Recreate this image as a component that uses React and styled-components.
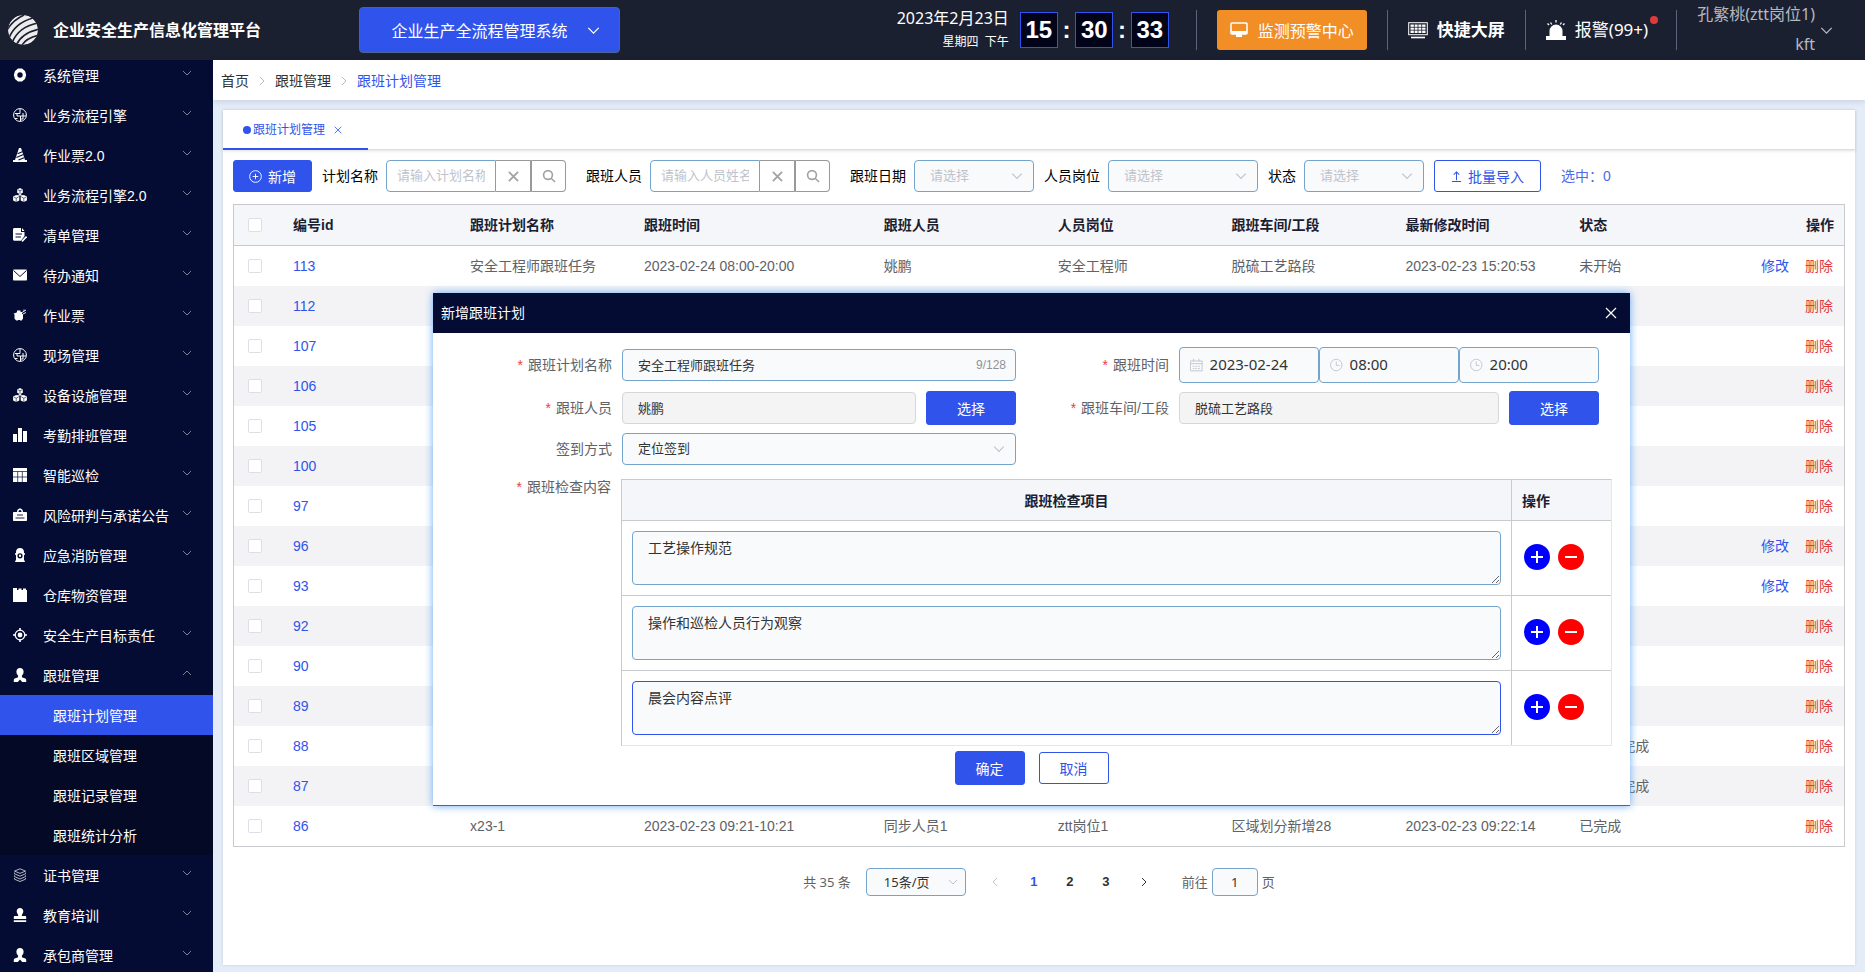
import React, { useState } from "react";
import styled, { createGlobalStyle, css } from "styled-components";

const latin = `"Liberation Sans", "Noto Sans CJK SC", sans-serif`;
const ui = `"Noto Sans", "Noto Sans CJK SC", sans-serif`;

const GlobalStyle = createGlobalStyle`
  * {
    box-sizing: border-box;
  }
  body {
    margin: 0;
    font-family: ${latin};
    font-size: 14px;
    line-height: 20px;
    color: #606266;
  }
  button, input, select, textarea {
    font-family: inherit;
    margin: 0;
    outline: none;
  }
  button {
    cursor: pointer;
    padding: 0;
  }
  a {
    text-decoration: none;
  }
`;

/* ---------- icons ---------- */

const Chevron = ({ size = 10, up, left, right }) => {
  let d = "M1 3l4 4 4-4";
  if (up) d = "M1 7l4-4 4 4";
  if (left) d = "M7 1L3 5l4 4";
  if (right) d = "M3 1l4 4-4 4";
  return (
    <svg width={size} height={size} viewBox="0 0 10 10" fill="none" stroke="currentColor" aria-hidden="true">
      <path d={d} />
    </svg>
  );
};

const Cross = ({ size = 12, weight = 1 }) => (
  <svg width={size} height={size} viewBox="0 0 12 12" stroke="currentColor" strokeWidth={weight} aria-hidden="true">
    <path d="M1 1l10 10M11 1L1 11" />
  </svg>
);

const Search = () => (
  <svg width="14" height="14" viewBox="0 0 14 14" fill="none" stroke="currentColor" strokeWidth="1.6" aria-hidden="true">
    <circle cx="6" cy="6" r="4.4" />
    <path d="M9.2 9.2l3.8 3.8" />
  </svg>
);

const Logo = () => (
  <svg width="32" height="32" viewBox="0 0 32 32" aria-hidden="true">
    <clipPath id="globe">
      <circle cx="16" cy="16" r="15" />
    </clipPath>
    <g clipPath="url(#globe)">
      <circle cx="16" cy="16" r="15" fill="#ececec" />
      <g fill="none" stroke="#1b2031" strokeWidth="1.7">
        <path d="M0 16Q6 6 17 1" />
        <path d="M2 24Q8 9 26 4" />
        <path d="M5 29Q11 13 31 9" />
        <path d="M9 32Q14 19 33 15" />
        <path d="M14 33Q18 24 33 21" />
      </g>
    </g>
  </svg>
);

const globeIcon = (
  <g fill="none" stroke="currentColor" strokeWidth="1">
    <circle cx="7" cy="7" r="6.4" />
    <path d="M7 1v4.500H2M4 5.500v2.500h3.500v5M7.500 8H13M10 5v3M10 8v3H8M2 10.500h2.500" />
  </g>
);
const cubesIcon = (
  <g>
    <path d="M7 0l2.800 1.400v3.400L7 6.200 4.200 4.800V1.400z" />
    <path d="M3.200 7l3.100 1.500v3.900L3.200 14 .1 12.400V8.500zM10.800 7l3.100 1.500v3.900L10.800 14l-3.100-1.600V8.500z" />
    <path d="M7 5v3M7 6.500L4 8M7 6.500L10 8" stroke="currentColor" />
    <path d="M7 2.800v3M3.200 10.200V14M10.800 10.200V14M4.800 1.800L7 2.800l2.200-1M.8 9l2.400 1.200L5.600 9M8.400 9l2.400 1.200L13.200 9" stroke="#050c33" strokeWidth=".6" fill="none" />
  </g>
);
const personIcon = (
  <path d="M7 0c2.200 0 3.600 1.500 3.600 3.600 0 1.800-.7 3.200-1.700 4.200v1.400l3.300 1.200c.8.300 1 .9 1 1.800V14H9.200L7 11.500 4.800 14H.8v-1.800c0-.9.200-1.500 1-1.800l3.300-1.200V7.800C4.100 6.800 3.400 5.400 3.400 3.600 3.400 1.500 4.800 0 7 0z" />
);

const glyphs = {
  gear: <path fillRule="evenodd" d="M5 .4h4L12 3l1.200 4L12 11l-3 2.600H5L2 11 .8 7 2 3zM7 4.300a2.700 2.700 0 100 5.400 2.700 2.700 0 000-5.400z" />,
  globe: globeIcon,
  cone: (
    <g>
      <path d="M6 0h2l4 12h2v2H0v-2h2z" />
      <path d="M4.600 5.800l4.600-2M3.400 9.600l7-3M5.500 12l5.500-2.300" stroke="#050c33" strokeWidth="1.100" />
    </g>
  ),
  cubes: cubesIcon,
  note: (
    <g>
      <path d="M0 1.500C0 .6.600 0 1.500 0H8v4h3.500v4L8 12.800H1.500C.6 12.800 0 12.200 0 11.300zM9 0l2.500 3H9z" />
      <path d="M2.500 6h6.500M2.500 9h5.500" stroke="#050c33" strokeWidth="1.200" />
      <path d="M9 13.400l4.500-4.800" stroke="currentColor" strokeWidth="1.600" />
    </g>
  ),
  mail: (
    <g>
      <rect y="1.500" width="14" height="11" rx="1" />
      <path d="M.5 2.500L7 8.500l6.500-6" fill="none" stroke="#050c33" />
    </g>
  ),
  spray: (
    <g>
      <path d="M4 2.500h3.500V4H9v1.500l1 1V10c0 1.500-1 2-2 2H4c-1.500 0-2.500-.5-2.500-2V6.500L.5 5.500l2-.5 1.500-.7z" />
      <path d="M9 4.500l4-2.500M10 6l3-1.500M11 3V1.500M4 12v1M8 12v1" stroke="currentColor" strokeWidth=".9" />
    </g>
  ),
  bars: <path d="M0 6h4v8H0zM5 0h4v14H5zM10 3h4v11h-4z" />,
  grid: (
    <g>
      <path d="M0 0h14v14H0z" />
      <path d="M0 3.500h14M0 9h14M4.700 3.500V14M9.300 3.500V14" stroke="#050c33" strokeWidth=".7" />
    </g>
  ),
  badge: (
    <g>
      <path fillRule="evenodd" d="M4 4c0-2 1.200-3.500 3-3.500S10 2 10 4h3c.6 0 1 .4 1 1v7c0 .6-.4 1-1 1H1c-.6 0-1-.4-1-1V5c0-.6.400-1 1-1zm1.500 0h3c0-1.300-.5-2-1.500-2s-1.500.7-1.500 2z" />
      <path d="M4 7h6M2.500 10h9" stroke="#050c33" strokeWidth=".9" />
    </g>
  ),
  hydrant: (
    <path fillRule="evenodd" d="M3 4c0-2.500 1.600-4 4-4s4 1.500 4 4v1h.800v2H11v5.500h.800V14H2.200v-1.500H3V7h-.8V5H3zm4 1.200a2.600 2.600 0 100 5.200 2.600 2.600 0 000-5.200zm0 1.400a1.200 1.200 0 110 2.400 1.200 1.200 0 010-2.400z" />
  ),
  box: <path d="M0 0h4v2h1.500V.6h3V2H10V.6h3V2h1v12H0z" />,
  target: (
    <g>
      <circle cx="7" cy="7" r="4.800" fill="none" stroke="currentColor" strokeWidth="1.300" />
      <circle cx="7" cy="7" r="2.400" />
      <path d="M7 0v3M7 11v3M0 7h3M11 7h3" stroke="currentColor" strokeWidth="1.600" />
    </g>
  ),
  person: personIcon,
  layers: (
    <path d="M7 .8l5.500 2.300L7 5.400 1.500 3.100zM1.500 4.500v1.300L7 8.200l5.500-2.400V4.500M1.500 7.300v1.300L7 11l5.500-2.400V7.300M1.500 10v1.200L7 13.500l5.500-2.300V10" fill="none" stroke="currentColor" strokeWidth=".7" />
  ),
  stamp: <path d="M7 0c2 0 3.300 1.400 3.300 3.200C10.300 5 9 6 8.700 8H12c.8 0 1.200.4 1.200 1.200V11H.8V9.200C.8 8.400 1.200 8 2 8h3.300C5 6 3.700 5 3.700 3.200 3.700 1.400 5 0 7 0zM.8 12.300h12.400V14H.8z" />,
};

const Glyph = ({ name }) => (
  <svg width="14" height="14" viewBox="0 0 14 14" fill="currentColor" aria-hidden="true">
    {glyphs[name]}
  </svg>
);

/* ---------- data ---------- */

const menu = [
  { icon: "gear", label: "系统管理" },
  { icon: "globe", label: "业务流程引擎" },
  { icon: "cone", label: "作业票2.0" },
  { icon: "cubes", label: "业务流程引擎2.0" },
  { icon: "note", label: "清单管理" },
  { icon: "mail", label: "待办通知" },
  { icon: "spray", label: "作业票" },
  { icon: "globe", label: "现场管理" },
  { icon: "cubes", label: "设备设施管理" },
  { icon: "bars", label: "考勤排班管理" },
  { icon: "grid", label: "智能巡检" },
  { icon: "badge", label: "风险研判与承诺公告" },
  { icon: "hydrant", label: "应急消防管理" },
  { icon: "box", label: "仓库物资管理", leaf: true },
  { icon: "target", label: "安全生产目标责任" },
  {
    icon: "person",
    label: "跟班管理",
    children: ["跟班计划管理", "跟班区域管理", "跟班记录管理", "跟班统计分析"],
  },
  { icon: "layers", label: "证书管理" },
  { icon: "stamp", label: "教育培训" },
  { icon: "person", label: "承包商管理" },
];

const columns = ["编号id", "跟班计划名称", "跟班时间", "跟班人员", "人员岗位", "跟班车间/工段", "最新修改时间", "状态"];

const rows = [
  {
    id: 113,
    cells: ["安全工程师跟班任务", "2023-02-24 08:00-20:00", "姚鹏", "安全工程师", "脱硫工艺路段", "2023-02-23 15:20:53", "未开始"],
    editable: true,
  },
  { id: 112 },
  { id: 107 },
  { id: 106 },
  { id: 105 },
  { id: 100 },
  { id: 97 },
  { id: 96, editable: true },
  { id: 93, editable: true },
  { id: 92 },
  { id: 90 },
  { id: 89 },
  { id: 88, cells: ["", "", "", "", "", "", "超时已完成"] },
  { id: 87, cells: ["", "", "", "", "", "", "超时已完成"] },
  {
    id: 86,
    cells: ["x23-1", "2023-02-23 09:21-10:21", "同步人员1", "ztt岗位1", "区域划分新增28", "2023-02-23 09:22:14", "已完成"],
  },
];

const emptyCells = ["", "", "", "", "", "", ""];

/* ---------- page ---------- */

const Header = () => (
  <TopBar>
    <Logo />
    <Brand>企业安全生产信息化管理平台</Brand>
    <SystemButton type="button">
      企业生产全流程管理系统
      <Chevron size={13} />
    </SystemButton>
    <HeaderRight>
      <DateBlock>
        <span>2023年2月23日</span>
        <small>星期四&nbsp; 下午</small>
      </DateBlock>
      <Clock>
        <b>15</b>:<b>30</b>:<b>33</b>
      </Clock>
      <Divider />
      <WarnButton type="button">
        <svg width="18" height="16" viewBox="0 0 18 16" fill="none" aria-hidden="true">
          <rect x="1" y="1" width="16" height="11" rx="1" stroke="#fff" strokeWidth="1.6" />
          <path d="M1 9h16v3H1zM6 12h6v3H6z" fill="#fff" />
        </svg>
        监测预警中心
      </WarnButton>
      <Divider />
      <HeaderLink href="#screen" $bold>
        <svg width="20" height="18" viewBox="0 0 20 18" fill="none" stroke="#fff" aria-hidden="true">
          <rect x=".7" y="1.700" width="18.600" height="12" />
          <path d="M2.500 3.500h15v8.500h-15z" fill="#fff" stroke="none" />
          <path d="M2 6.300h16M2 9.200h16M6.300 3v9.500M10 3v9.500M13.700 3v9.500" stroke="#1b2031" strokeWidth=".8" />
          <path d="M3 16.500h14" strokeWidth="1.600" />
        </svg>
        快捷大屏
      </HeaderLink>
      <Divider />
      <HeaderLink href="#alarm">
        <svg width="20" height="20" viewBox="0 0 20 20" fill="#fff" aria-hidden="true">
          <path d="M3.500 16V11a6.500 6.500 0 0113 0v5H20v4H0v-4z" />
          <path d="M10 0v2.500M4.500 2.500l1.300 2M15.500 2.500l-1.300 2M1.500 3.500L3 5M18.500 3.500L17 5" stroke="#fff" strokeWidth="1.300" />
        </svg>
        <Alarm>报警(99+)</Alarm>
      </HeaderLink>
      <Divider />
      <UserButton type="button">
        <span>
          孔繁桃(ztt岗位1)
          <br />
          kft
        </span>
        <Chevron size={13} />
      </UserButton>
    </HeaderRight>
  </TopBar>
);

const Sidebar = () => (
  <SideNav aria-label="主菜单">
    <MenuList>
      {menu.map((item, i) => (
        <li key={i}>
          <MenuItem href="#menu">
            <Glyph name={item.icon} />
            <span>{item.label}</span>
            {!item.leaf && <Chevron up={!!item.children} />}
          </MenuItem>
          {item.children && (
            <SubMenu>
              {item.children.map((child, n) => (
                <li key={child}>
                  <SubItem href="#sub" $active={n === 0}>
                    {child}
                  </SubItem>
                </li>
              ))}
            </SubMenu>
          )}
        </li>
      ))}
    </MenuList>
  </SideNav>
);

const SearchField = ({ id, label, placeholder }) => (
  <Field $wide>
    <label htmlFor={id}>{label}</label>
    <SearchGroup>
      <input id={id} type="text" placeholder={placeholder} />
      <button type="button" aria-label="清空">
        <Cross size={11} weight={2} />
      </button>
      <button type="button" aria-label="搜索">
        <Search />
      </button>
    </SearchGroup>
  </Field>
);

const FilterSelect = ({ id, label, width }) => (
  <Field>
    <label htmlFor={id}>{label}</label>
    <SelectBox $width={width} $empty>
      <select id={id}>
        <option>请选择</option>
      </select>
      <Chevron size={12} />
    </SelectBox>
  </Field>
);

const PlanTable = () => (
  <Table>
    <colgroup>
      <col style={{ width: 49 }} />
      <col style={{ width: "11%" }} />
      <col style={{ width: "10.8%" }} />
      <col style={{ width: "14.9%" }} />
      <col style={{ width: "10.8%" }} />
      <col style={{ width: "10.8%" }} />
      <col style={{ width: "10.8%" }} />
      <col style={{ width: "10.8%" }} />
      <col />
      <col style={{ width: 100 }} />
    </colgroup>
    <thead>
      <tr>
        <th>
          <Checkbox type="checkbox" aria-label="全选" />
        </th>
        {columns.map((name) => (
          <th key={name}>{name}</th>
        ))}
        <ActionHead>操作</ActionHead>
      </tr>
    </thead>
    <tbody>
      {rows.map((row) => (
        <tr key={row.id}>
          <td>
            <Checkbox type="checkbox" aria-label={`选择 ${row.id}`} />
          </td>
          <td>
            <TextLink href="#detail">{row.id}</TextLink>
          </td>
          {(row.cells || emptyCells).map((text, i) => (
            <td key={i}>{text}</td>
          ))}
          <ActionCell>
            {row.editable && <TextLink href="#edit">修改</TextLink>}
            <TextLink href="#delete" $danger>
              删除
            </TextLink>
          </ActionCell>
        </tr>
      ))}
    </tbody>
  </Table>
);

const PlanDialog = () => {
  const [checks, setChecks] = useState(["工艺操作规范", "操作和巡检人员行为观察", "晨会内容点评"]);

  const update = (i, value) => setChecks(checks.map((c, n) => (n === i ? value : c)));
  const add = (i) => setChecks([...checks.slice(0, i + 1), "", ...checks.slice(i + 1)]);
  const remove = (i) => setChecks(checks.filter((_, n) => n !== i));

  return (
    <Dialog role="dialog" aria-labelledby="dialog-title">
      <DialogHead>
        <h2 id="dialog-title">新增跟班计划</h2>
        <button type="button" aria-label="关闭">
          <Cross size={12} weight={1.2} />
        </button>
      </DialogHead>
      <FormColumns>
        <FormColumn>
          <FormRow $height={44}>
            <FormLabel htmlFor="plan-name" $required>
              跟班计划名称
            </FormLabel>
            <CountInput>
              <input id="plan-name" type="text" defaultValue="安全工程师跟班任务" />
              <span>9/128</span>
            </CountInput>
          </FormRow>
          <FormRow $height={42}>
            <FormLabel htmlFor="person" $required>
              跟班人员
            </FormLabel>
            <DisabledInput id="person" type="text" value="姚鹏" disabled />
            <Button type="button" $primary $width={90}>
              选择
            </Button>
          </FormRow>
          <FormRow $height={40}>
            <FormLabel htmlFor="sign">签到方式</FormLabel>
            <SelectBox $grow>
              <select id="sign">
                <option>定位签到</option>
              </select>
              <Chevron size={12} />
            </SelectBox>
          </FormRow>
        </FormColumn>
        <FormColumn $right>
          <FormRow $height={44}>
            <FormLabel htmlFor="date" $required>
              跟班时间
            </FormLabel>
            <TimeInput>
              <svg width="14" height="14" viewBox="0 0 14 14" fill="none" stroke="currentColor" aria-hidden="true">
                <path d="M.5 2.500h13v11H.5zM.5 5.500h13M4 0v3M10 0v3" />
                <path d="M3 8.500h8M3 11h8" strokeDasharray="2 1" />
              </svg>
              <input id="date" type="text" defaultValue="2023-02-24" />
            </TimeInput>
            {["08:00", "20:00"].map((time) => (
              <TimeInput key={time}>
                <svg width="14" height="14" viewBox="0 0 14 14" fill="none" stroke="currentColor" aria-hidden="true">
                  <circle cx="7" cy="7" r="6.400" />
                  <path d="M7 3v4.500h3.500" />
                </svg>
                <input type="text" aria-label="时间" defaultValue={time} />
              </TimeInput>
            ))}
          </FormRow>
          <FormRow $height={42}>
            <FormLabel htmlFor="area" $required>
              跟班车间/工段
            </FormLabel>
            <DisabledInput id="area" type="text" value="脱硫工艺路段" disabled />
            <Button type="button" $primary $width={90}>
              选择
            </Button>
          </FormRow>
        </FormColumn>
      </FormColumns>
      <CheckRow>
        <FormLabel as="span" $required>
          跟班检查内容
        </FormLabel>
        <CheckTable>
          <thead>
            <tr>
              <th>跟班检查项目</th>
              <th>操作</th>
            </tr>
          </thead>
          <tbody>
            {checks.map((text, i) => (
              <tr key={i}>
                <td>
                  <CheckText
                    aria-label={`检查项目 ${i + 1}`}
                    value={text}
                    $focused={i === 2}
                    onChange={(e) => update(i, e.target.value)}
                  />
                </td>
                <td>
                  <RoundButtons>
                    <RoundButton type="button" aria-label="增加" onClick={() => add(i)}>
                      <svg width="12" height="12" viewBox="0 0 12 12" stroke="#fff" strokeWidth="2" aria-hidden="true">
                        <path d="M0 6h12M6 0v12" />
                      </svg>
                    </RoundButton>
                    <RoundButton type="button" aria-label="移除" $red onClick={() => remove(i)}>
                      <svg width="12" height="12" viewBox="0 0 12 12" stroke="#fff" strokeWidth="2" aria-hidden="true">
                        <path d="M0 6h12" />
                      </svg>
                    </RoundButton>
                  </RoundButtons>
                </td>
              </tr>
            ))}
          </tbody>
        </CheckTable>
      </CheckRow>
      <DialogFoot>
        <Button type="button" $primary $width={70}>
          确定
        </Button>
        <Button type="button" $width={70}>
          取消
        </Button>
      </DialogFoot>
    </Dialog>
  );
};

const App = () => (
  <Page>
    <GlobalStyle />
    <Header />
    <Body>
      <Sidebar />
      <Main>
        <Breadcrumb aria-label="面包屑">
          <a href="#home">首页</a>
          <Chevron right />
          <a href="#group">跟班管理</a>
          <Chevron right />
          <a href="#plan" aria-current="page">
            跟班计划管理
          </a>
        </Breadcrumb>
        <Card>
          <Tabs>
            <Tab>
              <i />
              <a href="#plan">跟班计划管理</a>
              <button type="button" aria-label="关闭标签">
                <Cross size={8} weight={1.2} />
              </button>
            </Tab>
          </Tabs>
          <Toolbar>
            <Button type="button" $primary $width={79} $gap={6}>
              <svg width="13" height="13" viewBox="0 0 14 14" fill="none" stroke="currentColor" aria-hidden="true">
                <circle cx="7" cy="7" r="6.300" />
                <path d="M4 7h6M7 4v6" />
              </svg>
              新增
            </Button>
            <SearchField id="q-plan" label="计划名称" placeholder="请输入计划名称" />
            <SearchField id="q-person" label="跟班人员" placeholder="请输入人员姓名" />
            <FilterSelect id="q-date" label="跟班日期" width={120} />
            <FilterSelect id="q-post" label="人员岗位" width={150} />
            <FilterSelect id="q-state" label="状态" width={120} />
            <Button type="button" $width={107} $gap={6}>
              <svg width="11" height="11" viewBox="0 0 12 12" fill="none" stroke="currentColor" strokeWidth="1.100" aria-hidden="true">
                <path d="M1 11.400h10M6 10V1M3 4l3-3 3 3" />
              </svg>
              批量导入
            </Button>
            <Selected>选中：0</Selected>
          </Toolbar>
          <PlanTable />
          <Pagination aria-label="分页">
            <span>共 35 条</span>
            <SelectBox $small>
              <select aria-label="每页条数">
                <option>15条/页</option>
              </select>
              <Chevron />
            </SelectBox>
            <Pager>
              <button type="button" aria-label="上一页" disabled>
                <Chevron left />
              </button>
              <button type="button" aria-current="page">
                1
              </button>
              <button type="button">2</button>
              <button type="button">3</button>
              <button type="button" aria-label="下一页">
                <Chevron right />
              </button>
            </Pager>
            <Jump>
              前往
              <input type="text" defaultValue="1" />页
            </Jump>
          </Pagination>
        </Card>
        <PlanDialog />
      </Main>
    </Body>
  </Page>
);

const Page = styled.div`
  display: flex;
  flex-direction: column;
  height: 100vh;
  overflow: hidden;
`;

const TopBar = styled.header`
  display: flex;
  align-items: center;
  flex: none;
  height: 60px;
  padding: 0 32px 0 7px;
  background: #1b2031;
  color: #fff;
  font-family: ${ui};
  font-size: 16px;
`;

const Brand = styled.h1`
  margin: 0 98px 0 14px;
  font-size: 16px;
  font-weight: 700;
  white-space: nowrap;
`;

const SystemButton = styled.button`
  display: flex;
  align-items: center;
  justify-content: center;
  gap: 19px;
  width: 261px;
  height: 46px;
  padding-left: 12px;
  border: 1px solid #4a6499;
  border-radius: 4px;
  background: #3054eb;
  color: #fff;
  font-size: 16px;
`;

const HeaderRight = styled.div`
  display: flex;
  align-items: center;
  margin-left: auto;
  white-space: nowrap;
`;

const DateBlock = styled.div`
  display: flex;
  flex-direction: column;
  align-items: flex-end;
  margin-right: 11px;
  padding-bottom: 2px;
  line-height: 24px;
  small {
    padding-top: 2px;
    font-size: 12px;
    line-height: 20px;
  }
`;

const Clock = styled.div`
  display: flex;
  align-items: center;
  justify-content: space-between;
  width: 149px;
  font: 700 24px/34px ${latin};
  b {
    width: 38px;
    border: 1px solid #3054eb;
    background: #02041a;
    text-align: center;
  }
`;

const Divider = styled.i`
  width: 1px;
  height: 40px;
  margin: 0 20px;
  background: #5b6479;
  ${Clock} + & {
    margin-left: 27px;
  }
`;

const WarnButton = styled.button`
  display: flex;
  align-items: center;
  justify-content: center;
  gap: 10px;
  width: 150px;
  height: 40px;
  border: 0;
  border-radius: 3px;
  background: #f28e26;
  color: #fff;
  font-size: 16px;
`;

const HeaderLink = styled.a`
  display: flex;
  align-items: center;
  gap: 9px;
  color: #fff;
  font-size: 17px;
  font-weight: ${(p) => (p.$bold ? 700 : 400)};
`;

const Alarm = styled.span`
  position: relative;
  margin-right: 8px;
  &::after {
    content: "";
    position: absolute;
    top: -4px;
    right: -10px;
    width: 8px;
    height: 8px;
    border-radius: 50%;
    background: #dc3b3b;
  }
`;

const UserButton = styled.button`
  display: flex;
  align-items: center;
  gap: 5px;
  border: 0;
  background: none;
  color: #b4b9c2;
  font-size: 16px;
  line-height: 30px;
  text-align: right;
  span {
    padding-bottom: 2px;
  }
`;

const Body = styled.div`
  display: flex;
  flex: 1;
  min-height: 0;
`;

const SideNav = styled.nav`
  flex: none;
  width: 213px;
  overflow: hidden;
  background: #050c33;
`;

const MenuList = styled.ul`
  margin: -5px 0 0;
  padding: 0;
  list-style: none;
`;

const MenuItem = styled.a`
  display: flex;
  align-items: center;
  height: 40px;
  padding: 0 21px 0 13px;
  color: #fff;
  span {
    flex: 1;
    margin-left: 16px;
    padding-top: 2px;
  }
  span + svg {
    margin-bottom: 4px;
    color: #7a7f92;
  }
`;

const SubMenu = styled.ul`
  margin: 0;
  padding: 0;
  list-style: none;
  background: #040926;
`;

const SubItem = styled.a`
  display: block;
  height: 40px;
  padding-left: 53px;
  line-height: 42px;
  color: #fff;
  background: ${(p) => (p.$active ? "#3054eb" : "none")};
`;

const Main = styled.main`
  position: relative;
  display: flex;
  flex-direction: column;
  flex: 1;
  min-width: 0;
  background: #e4ecf8;
`;

const Breadcrumb = styled.nav`
  display: flex;
  align-items: center;
  gap: 8px;
  flex: none;
  height: 40px;
  padding: 2px 0 0 8px;
  background: #fff;
  box-shadow: 0 1px 6px rgba(0, 30, 60, 0.15);
  color: #b4b9c4;
  a {
    color: #303133;
  }
  a[aria-current] {
    color: #3054eb;
  }
`;

const Card = styled.section`
  flex: 1;
  margin: 10px 10px 7px;
  background: #fff;
  box-shadow: 0 0 3px rgba(0, 30, 60, 0.12);
`;

const Tabs = styled.div`
  display: flex;
  height: 40px;
  border-bottom: 1px solid #dcdee2;
  box-shadow: 0 1px 3px rgba(0, 0, 0, 0.12);
`;

const Tab = styled.div`
  display: flex;
  align-items: center;
  width: 145px;
  height: 40px;
  padding: 2px 0 0 20px;
  border-bottom: 2px solid #3054eb;
  font-size: 12px;
  i {
    width: 8px;
    height: 8px;
    margin-right: 2px;
    border-radius: 50%;
    background: #3054eb;
  }
  a {
    color: #3054eb;
  }
  button {
    display: flex;
    margin-left: 9px;
    border: 0;
    background: none;
    color: #3054eb;
  }
`;

const Toolbar = styled.div`
  display: flex;
  align-items: center;
  gap: 10px;
  height: 54px;
  padding: 0 10px 2px;
  white-space: nowrap;
`;

const Button = styled.button`
  display: flex;
  align-items: center;
  justify-content: center;
  flex: none;
  gap: ${(p) => p.$gap || 0}px;
  width: ${(p) => p.$width}px;
  height: 32px;
  border: 1px solid #3054eb;
  border-radius: 3px;
  background: ${(p) => (p.$primary ? "#3054eb" : "#fff")};
  color: ${(p) => (p.$primary ? "#fff" : "#3054eb")};
  font-size: 14px;
`;

const Field = styled.div`
  display: flex;
  align-items: center;
  gap: 8px;
  margin-right: ${(p) => (p.$wide ? 10 : 0)}px;
  color: #000;
`;

const inputBox = css`
  height: 32px;
  border: 1px solid #74a4cb;
  border-radius: 4px;
  background: #f9fafc;
  color: #333;
  font-size: 13px;
`;

const SearchGroup = styled.div`
  display: flex;
  input {
    ${inputBox}
    width: 110px;
    padding: 0 10px 1px;
    border-radius: 4px 0 0 4px;
    background: #fff;
    &::placeholder {
      color: #bfc3cc;
    }
  }
  button {
    display: flex;
    align-items: center;
    justify-content: center;
    width: 35px;
    height: 32px;
    border: 1px solid #999;
    border-left: 0;
    background: #fff;
    color: #a3a3a3;
  }
  button:last-child {
    border-left: 1px solid #74a4cb;
    border-radius: 0 4px 4px 0;
  }
`;

const SelectBox = styled.div`
  position: relative;
  display: flex;
  align-items: center;
  flex: ${(p) => (p.$grow ? 1 : "none")};
  select {
    ${inputBox}
    appearance: none;
    width: ${(p) => (p.$grow ? "100%" : `${p.$width || 100}px`)};
    height: ${(p) => (p.$small ? 28 : 32)}px;
    padding: 0 15px 1px;
    color: ${(p) => (p.$empty ? "#bfc3cc" : "#333")};
    ${(p) => p.$small && "padding-left: 17px;"}
  }
  svg {
    position: absolute;
    right: ${(p) => (p.$small ? 8 : 11)}px;
    color: #c0c4cc;
    pointer-events: none;
  }
`;

const Selected = styled.span`
  margin-left: 10px;
  color: #4d6bea;
`;

const Table = styled.table`
  width: calc(100% - 20px);
  margin-left: 10px;
  table-layout: fixed;
  border-spacing: 0;
  border: 1px solid #c8cacd;
  th,
  td {
    height: 40px;
    padding: 0 0 0 10px;
    text-align: left;
    white-space: nowrap;
  }
  th {
    height: 41px;
    border-bottom: 1px solid #c8cacd;
    background: #f4f6fa;
    color: #1b2031;
    font-weight: 700;
  }
  th:first-child,
  td:first-child {
    padding-left: 14px;
  }
  tbody tr:nth-child(even) {
    background: #f3f3f5;
  }
`;

const ActionHead = styled.th`
  && {
    padding-right: 10px;
    text-align: right;
  }
`;

const ActionCell = styled.td`
  && {
    padding: 0 11px 0 0;
    text-align: right;
  }
`;

const Checkbox = styled.input`
  display: block;
  appearance: none;
  width: 14px;
  height: 14px;
  border: 1px solid #dcdfe6;
  border-radius: 2px;
  background: #fff;
`;

const TextLink = styled.a`
  color: ${(p) => (p.$danger ? "#dd3a3a" : "#3054eb")};
  & + & {
    margin-left: 16px;
  }
`;

const Pagination = styled.nav`
  display: flex;
  align-items: center;
  justify-content: center;
  height: 28px;
  margin-top: 21px;
  font-family: ${ui};
  font-size: 13px;
  ${SelectBox} {
    margin-left: 15px;
  }
`;

const Pager = styled.div`
  display: flex;
  margin: 0 17px 0 9px;
  button {
    display: flex;
    align-items: center;
    justify-content: center;
    width: 36px;
    border: 0;
    background: none;
    color: #303133;
    font: 700 13px/28px ${latin};
  }
  button:first-child,
  button:last-child {
    width: 41px;
  }
  button:disabled {
    color: #c0c4cc;
  }
  button[aria-current] {
    color: #3054eb;
  }
`;

const Jump = styled.label`
  display: flex;
  align-items: center;
  gap: 4px;
  input {
    ${inputBox}
    width: 46px;
    height: 28px;
    text-align: center;
  }
`;

/* the dialog floats above the table */
const Dialog = styled.div`
  position: absolute;
  top: 233px;
  left: 220px;
  right: 235px;
  background: #fff;
  border-bottom: 1px solid #5d646c;
  box-shadow: 0 0 8px #66aaf5;
`;

const DialogHead = styled.div`
  display: flex;
  align-items: center;
  justify-content: space-between;
  height: 40px;
  padding: 0 13px 0 8px;
  background: #050c33;
  color: #fff;
  h2 {
    margin: 0;
    font-size: 14px;
    font-weight: 400;
  }
  button {
    display: flex;
    border: 0;
    background: none;
    color: #fff;
  }
`;

const FormColumns = styled.div`
  display: grid;
  grid-template-columns: 1fr 1fr;
  padding: 10px 31px 0 0;
`;

const FormColumn = styled.div`
  padding-left: ${(p) => (p.$right ? 43 : 69)}px;
`;

const FormRow = styled.div`
  display: flex;
  align-items: center;
  height: ${(p) => p.$height}px;
  ${Button} {
    height: 34px;
    margin-left: 10px;
  }
`;

const FormLabel = styled.label`
  flex: none;
  width: 120px;
  padding-right: 10px;
  text-align: right;
  &::before {
    content: "${(p) => (p.$required ? "*" : "")}";
    margin-right: 5px;
    color: #f03a3a;
  }
`;

const CountInput = styled.div`
  ${inputBox}
  display: flex;
  align-items: center;
  flex: 1;
  padding: 0 9px 0 15px;
  input {
    flex: 1;
    min-width: 0;
    padding: 0 0 2px;
    border: 0;
    background: none;
    color: #333;
    font-size: 13px;
  }
  span {
    color: #909399;
    font-size: 12px;
  }
`;

const DisabledInput = styled.input`
  ${inputBox}
  flex: 1;
  min-width: 0;
  padding: 0 15px 2px;
  border-color: #d5d7db;
  background: #f4f4f4;
`;

const TimeInput = styled.div`
  ${inputBox}
  display: flex;
  align-items: center;
  flex: 1;
  height: 36px;
  padding-left: 10px;
  color: #c0c4cc;
  input {
    width: 100%;
    min-width: 0;
    padding: 0 0 2px 7px;
    border: 0;
    background: none;
    color: #333;
    font-family: ${ui};
    font-size: 15px;
  }
`;

const CheckRow = styled.div`
  display: flex;
  padding: 10px 18px 0 68px;
  line-height: 16px;
`;

const CheckTable = styled.table`
  flex: 1;
  table-layout: fixed;
  border-spacing: 0;
  border: 1px solid #c8cacd;
  border-right-color: #e3e6f3;
  border-bottom-color: #e3e6f3;
  th {
    height: 41px;
    padding-top: 2px;
    background: #f4f6fa;
    border-bottom: 1px solid #c8cacd;
    color: #1b2031;
    font-weight: 700;
  }
  td {
    height: 75px;
    padding: 0 10px;
    border-bottom: 1px solid #c8cacd;
  }
  th:last-child,
  td:last-child {
    width: 100px;
    padding-left: 10px;
    border-left: 1px solid #c8cacd;
    text-align: left;
  }
  tr:last-child td {
    height: 74px;
    border-bottom: 0;
  }
`;

const CheckText = styled.textarea`
  display: block;
  width: 100%;
  height: 54px;
  padding: 6px 15px;
  border: 1px solid ${(p) => (p.$focused ? "#3054eb" : "#74a4cb")};
  border-radius: 4px;
  background: #f9fafc;
  color: #333;
  font-size: 14px;
  line-height: 20px;
  resize: vertical;
`;

const RoundButtons = styled.div`
  display: flex;
  gap: 8px;
  padding: 0 0 2px 2px;
`;

const RoundButton = styled.button`
  display: flex;
  align-items: center;
  justify-content: center;
  width: 26px;
  height: 26px;
  border: 0;
  border-radius: 50%;
  background: ${(p) => (p.$red ? "#ff0000" : "#0000ff")};
`;

const DialogFoot = styled.div`
  display: flex;
  align-items: center;
  justify-content: center;
  gap: 14px;
  padding: 5px 0 20px;
  ${Button}:first-child {
    height: 34px;
  }
`;

export default App;
